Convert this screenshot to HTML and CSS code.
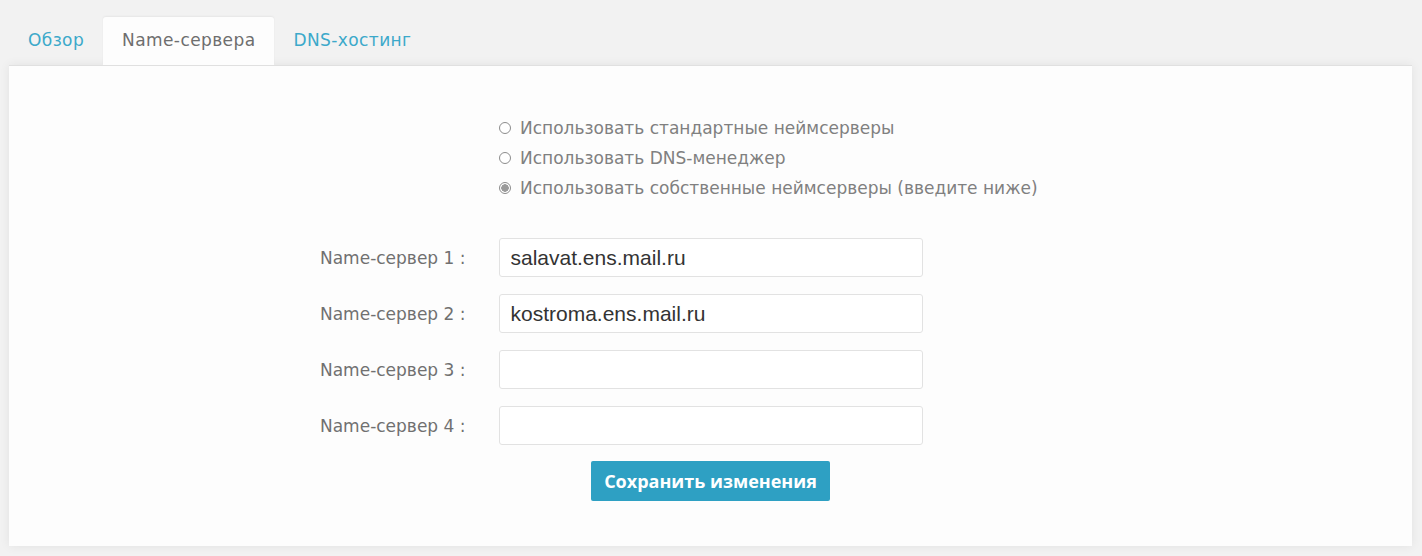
FILE: index.html
```html
<!DOCTYPE html>
<html>
<head>
	<meta charset="utf-8">
	<link rel="stylesheet" href="styles.css">
</head>
<body>

	<div class="domain">
		<div class="tabs">
			<a class="tab" href="#">Обзор</a>
			<a class="tab active" href="#">Name-сервера</a>
			<a class="tab" href="#">DNS-хостинг</a>
		</div>

		<div class="panel">
			<div class="nsmode">
				<label class="choice"><input type="radio" name="nsmode"> Использовать стандартные неймсерверы</label>
				<label class="choice"><input type="radio" name="nsmode"> Использовать DNS-менеджер</label>
				<label class="choice"><input type="radio" name="nsmode" checked> Использовать собственные неймсерверы (введите ниже)</label>
			</div>

			<form class="nsform" onsubmit="return false">
				<label class="nslabel" for="ns1">Name-сервер 1 :</label>
				<input class="nsinput" id="ns1" type="text" value="salavat.ens.mail.ru">

				<label class="nslabel" for="ns2">Name-сервер 2 :</label>
				<input class="nsinput" id="ns2" type="text" value="kostroma.ens.mail.ru">

				<label class="nslabel" for="ns3">Name-сервер 3 :</label>
				<input class="nsinput" id="ns3" type="text">

				<label class="nslabel" for="ns4">Name-сервер 4 :</label>
				<input class="nsinput" id="ns4" type="text">

				<div class="actions">
					<button class="savebutton" type="submit">Сохранить изменения</button>
				</div>
			</form>
		</div>
	</div>

</body>
</html>
```

FILE: styles.css
```css
html, body {
	margin: 0px;
	height: 100%;
}

body {
	background: #f2f2f2;
	font-family: "DejaVu Sans", "Open Sans", sans-serif;
	color: #7f7f7f;
	overflow: hidden;
}

.domain {
	padding: 17px 10px 0px 9px;
}

.tabs {
	display: flex;
	height: 48px;
}

.tab {
	display: block;
	padding: 0px 19px;
	line-height: 47px;
	font-size: 17px;
	letter-spacing: 0.4px;
	color: #3ca9ca;
	text-decoration: none;
	border-radius: 3px 3px 0px 0px;
}

.tab.active {
	background: #fdfdfd;
	color: #6e6e6e;
	box-shadow: 0px -1px 2px rgba(0, 0, 0, 0.05);
	position: relative;
	z-index: 1;
}

.panel {
	background: #fdfdfd;
	border-top: 1px solid #e0e0e0;
	box-shadow: 0px 0px 10px rgba(0, 0, 0, 0.07);
	height: 481px;
	box-sizing: border-box;
	padding-top: 47px;
}

.nsmode {
	display: flex;
	flex-direction: column;
	margin-left: 490px;
}

.choice {
	display: flex;
	align-items: center;
	height: 30px;
	font-size: 17px;
	color: #808080;
}

/* plain grey radio, the browser one is too dark here */
.choice input {
	appearance: none;
	margin: 0px 9px 0px 0px;
	width: 12px;
	height: 12px;
	border: 1px solid #8c8c8c;
	border-radius: 50%;
	background: #fff;
}

.choice input:checked {
	background: radial-gradient(circle, #9a9a9a 0px, #9a9a9a 3.5px, #fff 4px);
}

.nsform {
	display: grid;
	grid-template-columns: 1fr 424px 1fr;
	column-gap: 33px;
	row-gap: 17px;
	align-items: center;
	margin-top: 35px;
}

.nslabel {
	grid-column: 1;
	text-align: right;
	font-size: 17px;
	color: #707070;
}

.nsinput {
	grid-column: 2;
	height: 39px;
	box-sizing: border-box;
	border: 1px solid #e2e2e2;
	border-radius: 3px;
	background: #fff;
	padding: 0px 11px;
	font-family: "Liberation Sans", Arial, sans-serif;
	font-size: 21px;
	color: #333;
}

.actions {
	grid-column: 2;
	display: flex;
	justify-content: center;
	margin-top: -1px;
}

.savebutton {
	height: 40px;
	width: 239px;
	border: none;
	border-radius: 2px;
	background: #2ea0c3;
	color: #fff;
	font-family: "Open Sans", sans-serif;
	font-weight: bold;
	font-size: 18px;
	cursor: pointer;
}
```
